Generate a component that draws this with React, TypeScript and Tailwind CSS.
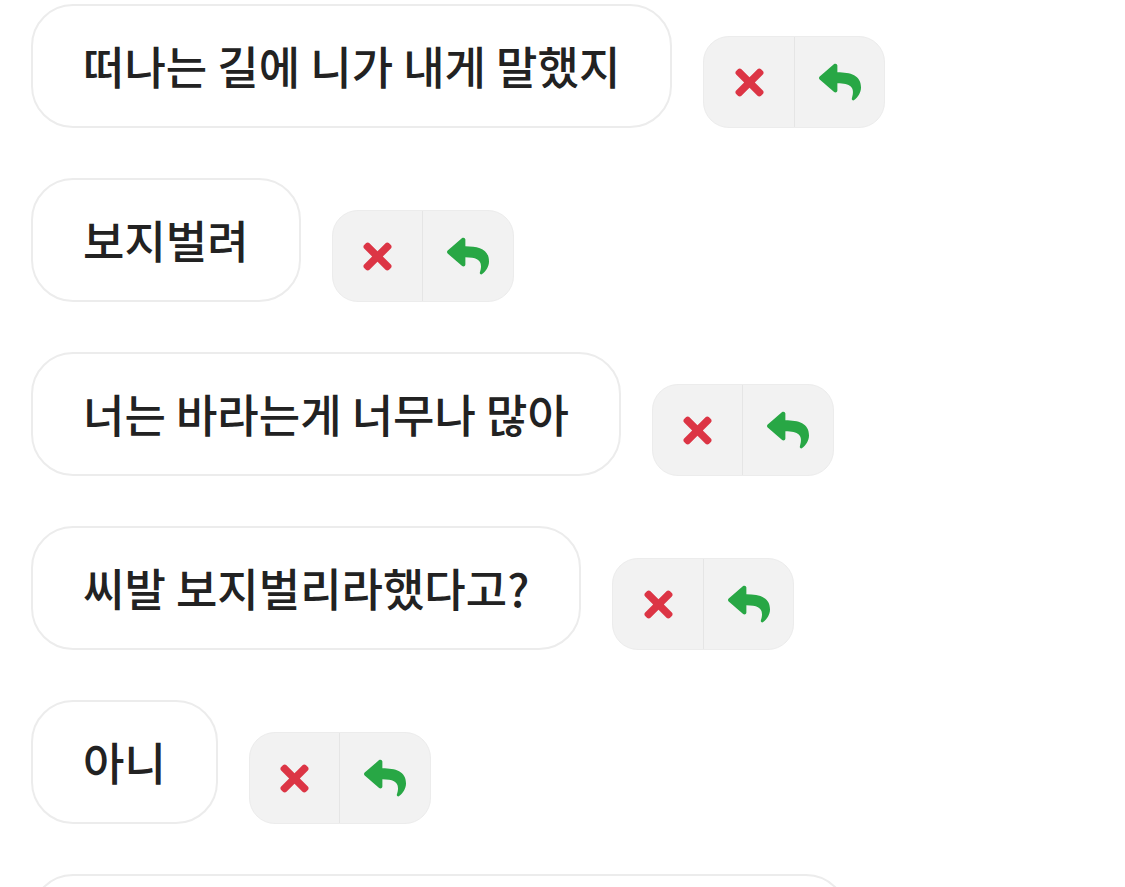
import { FaTimes, FaReply } from "react-icons/fa";

const lines = [
  "떠나는 길에 니가 내게 말했지",
  "보지벌려",
  "너는 바라는게 너무나 많아",
  "씨발 보지벌리라했다고?",
  "아니",
];

function Actions() {
  return (
    <div className="flex h-[92px] w-[182px] shrink-0 overflow-hidden rounded-[26px] border border-[#ececec] bg-[#f2f2f2]">
      <button className="flex flex-1 items-center justify-center border-r border-[#e5e5e5]">
        <FaTimes className="h-[41px] w-[41px] text-[#dc3545]" />
      </button>
      <button className="flex flex-1 items-center justify-center">
        <FaReply className="h-[42px] w-[44px] text-[#28a745]" />
      </button>
    </div>
  );
}

function Row({ text }: { text: string }) {
  return (
    <div className="flex items-end gap-[31px]">
      <div className="flex h-[124px] items-center rounded-[42px] border-2 border-[#ececec] bg-white px-[50px]">
        <span className="whitespace-nowrap text-[45px] font-medium text-[#222]">
          {text}
        </span>
      </div>
      <Actions />
    </div>
  );
}

export default function App() {
  return (
    <div
      className="flex h-[887px] flex-col gap-[50px] overflow-hidden bg-white pl-[31px] pt-[4px]"
      style={{ fontFamily: '"Noto Sans CJK KR", "Noto Sans", sans-serif' }}
    >
      {lines.map((t) => (
        <Row key={t} text={t} />
      ))}
      <div className="h-[124px] w-[817px] shrink-0 rounded-[42px] border-2 border-[#ececec] bg-white" />
    </div>
  );
}
